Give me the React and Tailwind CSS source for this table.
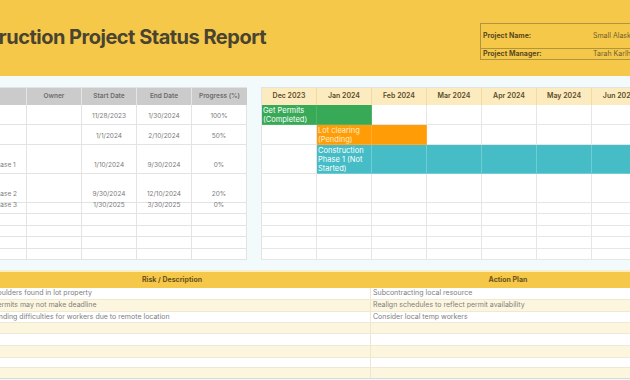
import React from "react";

const rowHeights = ["h-[20px]", "h-[20px]", "h-[29px]", "h-[29px]", "h-[11px]", "h-[12px]", "h-[11px]", "h-[12px]", "h-[11px]"];

const tasks = [
    { name: "Get Permits", owner: "", start: "11/28/2023", end: "1/30/2024", progress: "100%" },
    { name: "Lot clearing", owner: "", start: "1/1/2024", end: "2/10/2024", progress: "50%" },
    { name: "Construction Phase 1", owner: "", start: "1/10/2024", end: "9/30/2024", progress: "0%" },
    { name: "Construction Phase 2", owner: "", start: "9/30/2024", end: "12/10/2024", progress: "20%" },
    { name: "Construction Phase 3", owner: "", start: "1/30/2025", end: "3/30/2025", progress: "0%" },
    { name: "", owner: "", start: "", end: "", progress: "" },
    { name: "", owner: "", start: "", end: "", progress: "" },
    { name: "", owner: "", start: "", end: "", progress: "" },
    { name: "", owner: "", start: "", end: "", progress: "" },
];

const months = ["Dec 2023", "Jan 2024", "Feb 2024", "Mar 2024", "Apr 2024", "May 2024", "Jun 2024", "Jul 2024"];

// which month cells each bar covers, label sits in the first one
const bars = [
    { row: 0, from: 0, to: 1, label: "Get Permits (Completed)", cell: "bg-[#38a956] border-[#4fb46a]", text: "text-white" },
    { row: 1, from: 1, to: 2, label: "Lot clearing (Pending)", cell: "bg-[#ff9c06] border-[#ffab33]", text: "text-[#fff0cf]" },
    { row: 2, from: 1, to: 7, label: "Construction Phase 1 (Not Started)", cell: "bg-[#45bcc6] border-[#6fcdd5]", text: "text-white" },
];

const risks = [
    { risk: "Boulders found in lot property", plan: "Subcontracting local resource" },
    { risk: "Permits may not make deadline", plan: "Realign schedules to reflect permit availability" },
    { risk: "Finding difficulties for workers due to remote location", plan: "Consider local temp workers" },
    { risk: "", plan: "" },
    { risk: "", plan: "" },
    { risk: "", plan: "" },
    { risk: "", plan: "" },
    { risk: "", plan: "" },
];
const riskHeights = ["h-[12px]", "h-[12px]", "h-[11px]", "h-[11px]", "h-[12px]", "h-[12px]", "h-[10px]", "h-[11px]"];

const TaskTable = () => (
    <div className="border-l border-t border-[#e3e3e3] bg-white">
        <div className="flex h-[17px] bg-[#cbcbcb] text-[6.5px] font-semibold text-[#6b6b6b]">
            <div className="w-[79px] border-r border-white/50 flex items-center pl-[3px]">Task</div>
            <div className="w-[55px] border-r border-white/50 flex items-center justify-center">Owner</div>
            <div className="w-[55px] border-r border-white/50 flex items-center justify-center">Start Date</div>
            <div className="w-[55px] border-r border-white/50 flex items-center justify-center">End Date</div>
            <div className="w-[55px] flex items-center justify-center">Progress (%)</div>
        </div>
        {tasks.map((t, i) => (
            <div key={i} className={`flex ${rowHeights[i]} text-[6.5px] text-[#7a7a7a]`}>
                <div className="w-[79px] border-r border-b border-[#e3e3e3] flex items-end pl-[3px] pb-[2px] whitespace-nowrap">{t.name}</div>
                <div className="w-[55px] border-r border-b border-[#e3e3e3] flex items-end justify-center pb-[2px]">{t.owner}</div>
                <div className="w-[55px] border-r border-b border-[#e3e3e3] flex items-end justify-center pb-[2px]">{t.start}</div>
                <div className="w-[55px] border-r border-b border-[#e3e3e3] flex items-end justify-center pb-[2px]">{t.end}</div>
                <div className="w-[55px] border-r border-b border-[#e3e3e3] flex items-end justify-center pb-[2px]">{t.progress}</div>
            </div>
        ))}
    </div>
);

const Gantt = () => (
    <div className="border-l border-t border-[#e3e3e3] bg-white">
        <div className="flex h-[17px] bg-[#fdebc0] text-[7px] font-semibold text-[#5c4c28]">
            {months.map((m) => (
                <div key={m} className="w-[55px] shrink-0 border-r border-[#f3dca4] flex items-center justify-center">{m}</div>
            ))}
        </div>
        {rowHeights.map((h, i) => {
            const bar = bars.find((b) => b.row === i);
            return (
                <div key={i} className={`flex ${h}`}>
                    {months.map((m, j) => {
                        const on = bar && j >= bar.from && j <= bar.to;
                        return (
                            <div key={m} className={`w-[55px] shrink-0 border-r border-b ${on ? bar.cell : "border-[#e6e6e6]"}`}>
                                {on && j === bar.from && (
                                    <div className={`text-[7.5px] leading-[9px] px-[1px] pt-[1px] w-[55px] ${bar.text}`}>{bar.label}</div>
                                )}
                            </div>
                        );
                    })}
                </div>
            );
        })}
    </div>
);

const RiskTable = () => (
    <div className="ml-[37px] border-t-2 border-[#fbeec6]">
        <div className="flex h-[16px] bg-[#f5c84a] text-[7px] font-bold text-[#6b531c]">
            <div className="w-[398px] shrink-0 flex items-center justify-center">Risk / Description</div>
            <div className="w-[274px] shrink-0 flex items-center justify-center">Action Plan</div>
            <div className="flex-1" />
        </div>
        {risks.map((r, i) => (
            <div key={i} className={`flex ${riskHeights[i]} text-[7px] text-[#808080] border-b ${i === risks.length - 1 ? "border-[#d9d9d9]" : "border-[#efe8d2]"} ${i % 2 === 0 ? "bg-white" : "bg-[#fdf6df]"}`}>
                <div className="w-[398px] shrink-0 flex items-center pl-[20px] border-r border-[#ece6d2] whitespace-nowrap">{r.risk}</div>
                <div className="w-[274px] shrink-0 flex items-center pl-[2px] whitespace-nowrap">{r.plan}</div>
                <div className="flex-1" />
            </div>
        ))}
    </div>
);

const App = () => {
    return (
        <div className="w-[630px] h-[380px] overflow-hidden bg-[#f2fafb] font-['Inter',sans-serif]">
            <div className="w-[760px] -ml-[64px]">
                <div className="h-[76px] bg-[#f5c84a] flex justify-between">
                    <h1 className="self-center pl-[7px] pb-[3px] text-[20px] font-bold tracking-tight text-[#4a4330] whitespace-nowrap">
                        Construction Project Status Report
                    </h1>
                    <div className="w-[216px] mt-[23px] self-start border border-[#b0953f] text-[7px]">
                        <div className="flex h-[25px] items-center border-b border-[#b0953f]">
                            <div className="w-[110px] pl-[2px] font-bold text-[#5b4a1e]">Project Name:</div>
                            <div className="pl-[2px] text-[#6f5e2e]">Small Alaskan Cabin</div>
                        </div>
                        <div className="flex h-[10px] items-center">
                            <div className="w-[110px] pl-[2px] font-bold text-[#5b4a1e]">Project Manager:</div>
                            <div className="pl-[2px] text-[#6f5e2e]">Tarah Karlhuber</div>
                        </div>
                    </div>
                </div>
                <div className="flex gap-[14px] pt-[11px] pl-[11px]">
                    <TaskTable />
                    <Gantt />
                </div>
                <div className="pt-[10px]">
                    <RiskTable />
                </div>
            </div>
        </div>
    );
};

export default App;
